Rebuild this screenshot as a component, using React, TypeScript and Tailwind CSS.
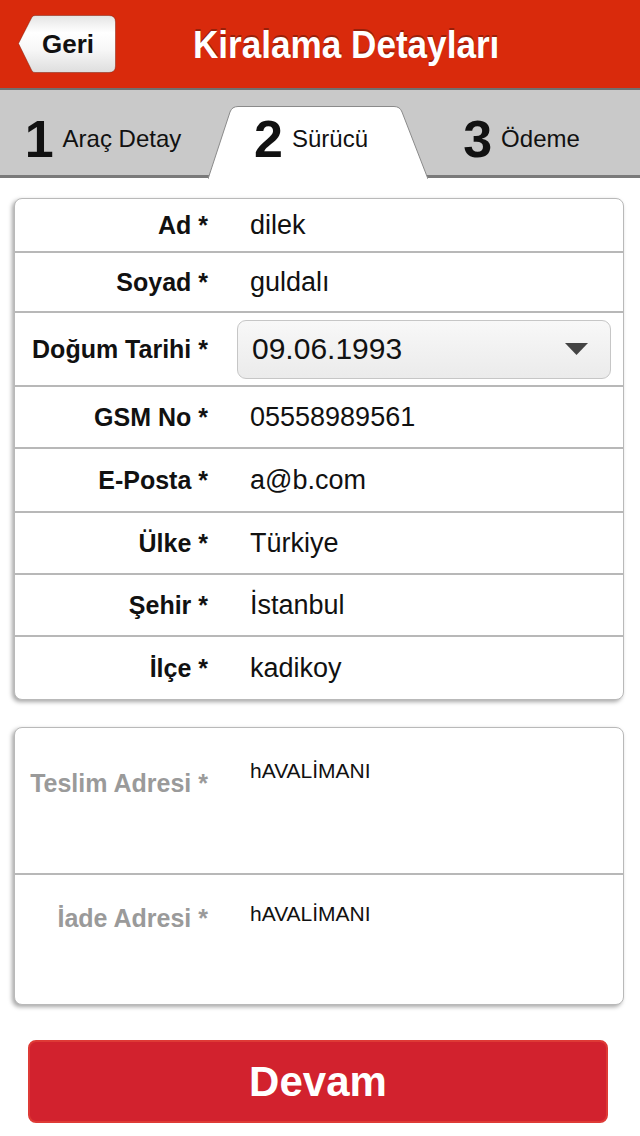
import React from 'react';

const font = "font-['Liberation_Sans',Arial,sans-serif]";

interface Field {
  label: string;
  value: string;
  h: string;
  select?: boolean;
}

const fields: Field[] = [
  { label: 'Ad *', value: 'dilek', h: 'h-[52px]' },
  { label: 'Soyad *', value: 'guldalı', h: 'h-[60px]' },
  { label: 'Doğum Tarihi *', value: '09.06.1993', h: 'h-[74px]', select: true },
  { label: 'GSM No *', value: '05558989561', h: 'h-[62px]' },
  { label: 'E-Posta *', value: 'a@b.com', h: 'h-[64px]' },
  { label: 'Ülke *', value: 'Türkiye', h: 'h-[62px]' },
  { label: 'Şehir *', value: 'İstanbul', h: 'h-[62px]' },
  { label: 'İlçe *', value: 'kadikoy', h: 'h-[64px]' },
];

const BackButton: React.FC = () => (
  <button className="relative w-[99px] h-[58px] ml-[17px] flex items-center pl-[25px]">
    <svg className="absolute inset-0" width="99" height="58" viewBox="0 0 99 58">
      <defs>
        <linearGradient id="geri" x1="0" y1="0" x2="0" y2="1">
          <stop offset="0" stopColor="#e4e4e4" />
          <stop offset="0.3" stopColor="#ffffff" />
          <stop offset="0.6" stopColor="#f7f7f7" />
          <stop offset="1" stopColor="#dedede" />
        </linearGradient>
      </defs>
      <path
        d="M1.5 28.5 L15 2 Q16 0.5 18 0.5 L92 0.5 Q98.5 0.5 98.5 7 L98.5 51 Q98.5 57.5 92 57.5 L18 57.5 Q16 57.5 15 56 Z"
        fill="url(#geri)"
        stroke="rgba(120,20,0,0.45)"
        strokeWidth="1"
      />
    </svg>
    <span className="relative text-[26px] font-bold text-[#111] leading-none">Geri</span>
  </button>
);

const Tab: React.FC<{ num: string; label: string }> = ({ num, label }) => (
  <div className="flex items-center justify-center gap-[9px] pt-[12px]">
    <span className="text-[52px] font-bold leading-none text-[#111]">{num}</span>
    <span className="text-[24px] leading-none text-[#111]">{label}</span>
  </div>
);

export default function App() {
  return (
    <div className={`${font} w-[640px] h-[1136px] bg-white overflow-hidden`}>
      {/* header */}
      <header className="h-[88px] bg-[#d92a0c] flex items-center">
        <BackButton />
        <h1 className="ml-[77px] text-[39px] font-bold text-white leading-none scale-x-[0.9] origin-left whitespace-nowrap [text-shadow:0_-2px_0_#97200a]">
          Kiralama Detayları
        </h1>
      </header>

      {/* steps */}
      <div className="relative h-[90px] bg-[#c9c9c9] border-t-2 border-t-[#707070] border-b-[3px] border-b-[#7a7a7a]">
        <svg className="absolute left-[208px] top-[16px]" width="220" height="73" viewBox="0 0 220 73">
          <path d="M0 73 L22 6 Q24 0.5 30 0.5 L186 0.5 Q192 0.5 194 6 L220 73 Z" fill="#ffffff" />
          <path d="M0 73 L22 6 Q24 0.5 30 0.5 L186 0.5 Q192 0.5 194 6 L220 73" fill="none" stroke="#8a8a8a" strokeWidth="1" />
        </svg>
        <div className="relative h-full grid grid-cols-[206px_210px_211px]">
          <Tab num="1" label="Araç Detay" />
          <Tab num="2" label="Sürücü" />
          <Tab num="3" label="Ödeme" />
        </div>
      </div>

      {/* driver form */}
      <div className="ml-[14px] mt-[20px] w-[610px] bg-white border border-[#b9b9b9] rounded-[8px] shadow-[-2px_2px_4px_rgba(0,0,0,0.35)]">
        {fields.map((f, i) => (
          <div
            key={f.label}
            className={`${f.h} flex items-center ${i > 0 ? 'border-t-2 border-[#b8b8b8]' : ''}`}
          >
            <div className="w-[193px] shrink-0 text-right text-[25px] font-bold text-[#111] leading-none">
              {f.label}
            </div>
            {f.select ? (
              <div className="ml-[29px] w-[374px] h-[59px] flex items-center justify-between pl-[14px] pr-[22px] rounded-[9px] border border-[#c6c6c6] bg-gradient-to-b from-[#f8f8f8] to-[#ebebeb]">
                <span className="text-[30px] text-[#111] leading-none">{f.value}</span>
                <svg width="23" height="12" viewBox="0 0 23 12">
                  <path d="M0 0 L23 0 L11.5 12 Z" fill="#444" />
                </svg>
              </div>
            ) : (
              <div className="ml-[42px] text-[27px] text-[#111] leading-none">{f.value}</div>
            )}
          </div>
        ))}
      </div>

      {/* addresses */}
      <div className="ml-[14px] mt-[27px] w-[610px] bg-white border border-[#b9b9b9] rounded-[8px] shadow-[-2px_2px_4px_rgba(0,0,0,0.35)]">
        <div className="h-[145px] flex items-start">
          <div className="w-[193px] shrink-0 pt-[43px] text-right text-[25px] font-bold text-[#9a9a9a] leading-none">
            Teslim Adresi *
          </div>
          <div className="ml-[42px] pt-[32px] text-[21px] text-[#111] leading-none">hAVALİMANI</div>
        </div>
        <div className="h-[131px] flex items-start border-t-2 border-[#b8b8b8]">
          <div className="w-[193px] shrink-0 pt-[31px] text-right text-[25px] font-bold text-[#9a9a9a] leading-none">
            İade Adresi *
          </div>
          <div className="ml-[42px] pt-[28px] text-[21px] text-[#111] leading-none">hAVALİMANI</div>
        </div>
      </div>

      <button className="ml-[28px] mt-[35px] w-[580px] h-[83px] rounded-[8px] bg-[#d2222e] border-2 border-[#de3a36] flex items-center justify-center text-white text-[42px] font-bold leading-none">
        Devam
      </button>
    </div>
  );
}
